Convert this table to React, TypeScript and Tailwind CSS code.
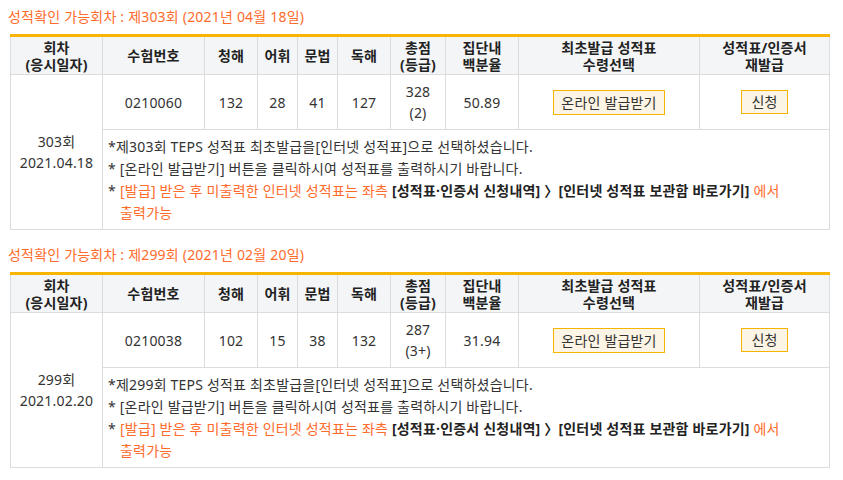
import React from 'react';

type Round = {
  no: string;
  title: string;
  date: string;
  examNo: string;
  listening: number;
  vocab: number;
  grammar: number;
  reading: number;
  total: number;
  grade: string;
  percentile: string;
};

const rounds: Round[] = [
  {
    no: '303',
    title: '제303회 (2021년 04월 18일)',
    date: '2021.04.18',
    examNo: '0210060',
    listening: 132,
    vocab: 28,
    grammar: 41,
    reading: 127,
    total: 328,
    grade: '2',
    percentile: '50.89',
  },
  {
    no: '299',
    title: '제299회 (2021년 02월 20일)',
    date: '2021.02.20',
    examNo: '0210038',
    listening: 102,
    vocab: 15,
    grammar: 38,
    reading: 132,
    total: 287,
    grade: '3+',
    percentile: '31.94',
  },
];

const th = 'border-l border-[#dcdcdc] first:border-l-0 font-bold text-[#222] leading-[17px] align-middle';
const td = 'border-l border-[#dcdcdc] text-center align-middle';

const ScoreTable = ({ r }: { r: Round }) => (
  <div className="mb-[15px]">
    <p className="h-[20px] leading-[20px] text-[#ff6b2b] mb-[7px]">성적확인 가능회차 : {r.title}</p>
    <table className="w-[819px] ml-[2px] table-fixed border-collapse border-t-[3px] border-t-[#f7b500] border-x border-b border-[#dcdcdc]">
      <colgroup>
        <col className="w-[92px]" />
        <col className="w-[102px]" />
        <col className="w-[53px]" />
        <col className="w-[40px]" />
        <col className="w-[40px]" />
        <col className="w-[53px]" />
        <col className="w-[55px]" />
        <col className="w-[73px]" />
        <col className="w-[181px]" />
        <col className="w-[130px]" />
      </colgroup>
      <thead>
        <tr className="h-[39px] bg-[#f4f5f7] border-b border-[#dcdcdc]">
          <th className={th}>회차<br />(응시일자)</th>
          <th className={th}>수험번호</th>
          <th className={th}>청해</th>
          <th className={th}>어휘</th>
          <th className={th}>문법</th>
          <th className={th}>독해</th>
          <th className={th}>총점<br />(등급)</th>
          <th className={th}>집단내<br />백분율</th>
          <th className={th}>최초발급 성적표<br />수령선택</th>
          <th className={th}>성적표/인증서<br />재발급</th>
        </tr>
      </thead>
      <tbody>
        <tr className="h-[55px] border-b border-[#dcdcdc]">
          <td rowSpan={2} className="text-center align-middle leading-[21px]">
            {r.no}회<br />{r.date}
          </td>
          <td className={td}>{r.examNo}</td>
          <td className={td}>{r.listening}</td>
          <td className={td}>{r.vocab}</td>
          <td className={td}>{r.grammar}</td>
          <td className={td}>{r.reading}</td>
          <td className={`${td} leading-[21px]`}>{r.total}<br />({r.grade})</td>
          <td className={td}>{r.percentile}</td>
          <td className={td}>
            <button className="h-[25px] px-[7px] border border-[#f5b400] bg-[#fcf4e4] text-[#333] leading-[23px]">
              온라인 발급받기
            </button>
          </td>
          <td className={td}>
            <button className="h-[24px] px-[9px] border border-[#f5b400] bg-[#fcf4e4] text-[#333] leading-[22px]">
              신청
            </button>
          </td>
        </tr>
        <tr>
          <td colSpan={9} className="border-l border-[#dcdcdc] px-[5px] pt-[6px] pb-[5px] leading-[22px] align-top">
            <p>*제{r.no}회 TEPS 성적표 최초발급을[인터넷 성적표]으로 선택하셨습니다.</p>
            <p>* [온라인 발급받기] 버튼을 클릭하시여 성적표를 출력하시기 바랍니다.</p>
            <div className="flex">
              <span className="w-[12px] shrink-0">*</span>
              <p className="text-[#ff6b2b]">
                [발급] 받은 후 미출력한 인터넷 성적표는 좌측{' '}
                <b className="text-[#222]">[성적표·인증서 신청내역] 〉[인터넷 성적표 보관함 바로가기]</b> 에서
                <br />
                출력가능
              </p>
            </div>
          </td>
        </tr>
      </tbody>
    </table>
  </div>
);

export default function App() {
  return (
    <div className="w-[843px] h-[480px] overflow-hidden bg-white px-[8px] pt-[7px] text-[14px] tracking-[0.2px] text-[#333] font-['Noto_Sans','Noto_Sans_CJK_KR',sans-serif]">
      {rounds.map((r) => (
        <ScoreTable key={r.no} r={r} />
      ))}
    </div>
  );
}
